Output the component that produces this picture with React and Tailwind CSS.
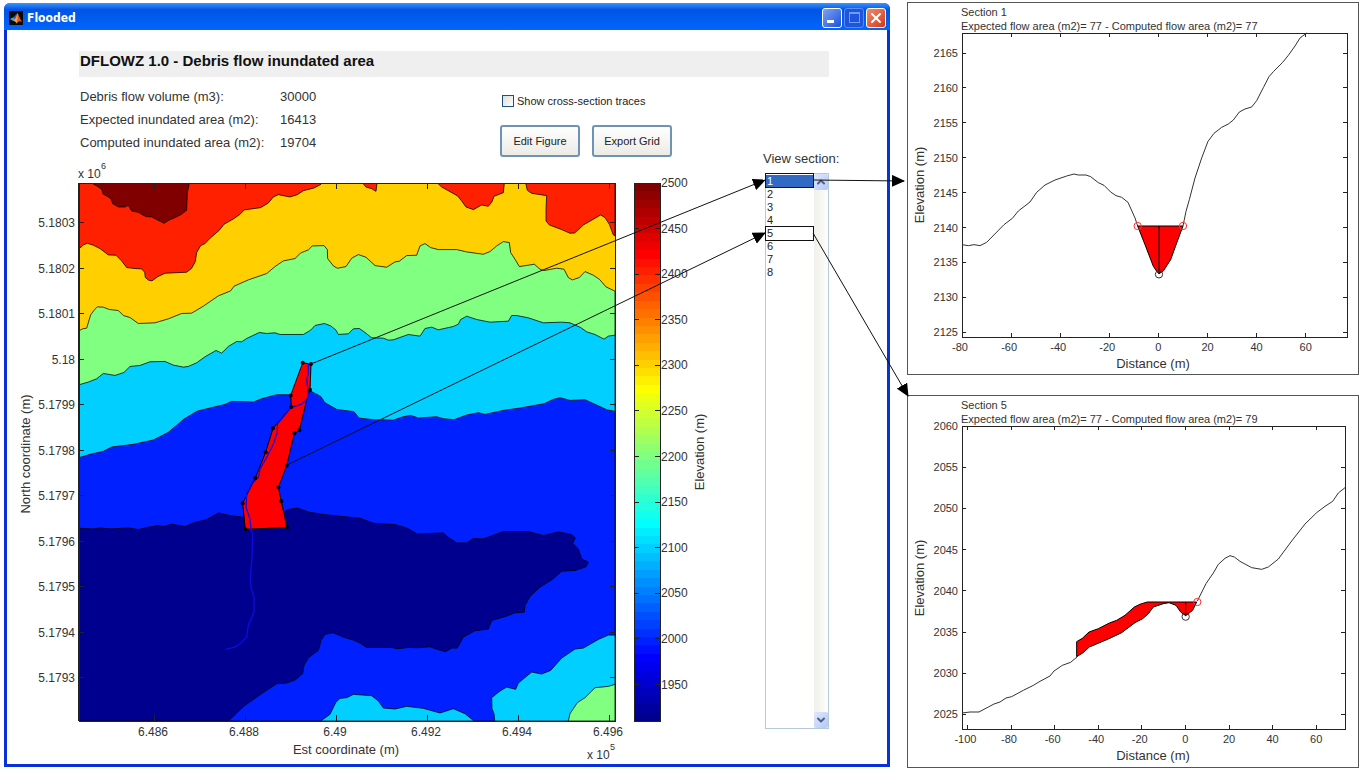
import React, { useLayoutEffect, useRef, useState } from 'react';
import { ChevronDown, ChevronUp, X } from 'lucide-react';

const AXIS = '#222';
const LABEL = '#333';

// Elevation bands, sampled on a 1608 x 1616 grid
const BANDS = [
  { fill: '#800000', d: 'M38 0 55 10 68 19 73 34 88 42 97 49 101 62 118 72 138 72 148 67 158 84 178 88 201 101 218 102 255 121 273 110 288 104 308 94 323 82 325 29 331 0Z' },
  { fill: '#ff2000', d: 'M851 0 861 12 878 17 891 25 894 0Z' },
  { fill: '#ff2000', d: 'M1075 0 1088 12 1113 26 1136 39 1148 54 1161 72 1183 80 1208 66 1228 70 1239 56 1245 40 1273 29 1276 0Z' },
  { fill: '#ff2000', d: 'M1340 0 1345 22 1358 31 1403 38 1401 79 1401 114 1411 126 1448 140 1473 151 1487 150 1513 126 1548 106 1565 96 1578 104 1591 124 1603 156 1608 159V0Z' },
  { fill: '#80ff80', d: 'M0 444 11 438 23 436 35 396 47 380 55 372 73 373 91 380 118 383 133 398 153 404 178 422 228 420 268 408 308 392 338 391 373 370 418 339 455 324 465 310 508 291 563 272 588 251 613 234 648 227 665 210 688 201 700 189 735 188 745 200 746 227 763 249 775 256 801 251 818 226 838 215 861 223 888 248 923 253 948 237 961 235 983 218 1013 217 1023 189 1038 182 1055 194 1078 200 1133 200 1163 207 1213 214 1233 206 1253 189 1273 176 1291 179 1295 209 1308 229 1321 251 1366 244 1383 259 1395 263 1433 256 1455 259 1468 284 1480 291 1501 284 1518 266 1543 277 1561 289 1581 312 1608 325V1616H0Z' },
  { fill: '#00cfff', d: 'M0 606 28 598 53 588 73 572 108 578 135 569 153 551 183 548 213 537 258 536 283 547 313 553 328 551 353 540 378 522 411 503 428 511 448 491 473 476 488 477 503 467 541 449 563 452 588 450 603 455 673 455 695 442 708 428 736 422 755 429 771 442 778 455 808 453 823 438 841 437 858 449 878 465 913 466 928 472 943 471 988 455 1023 460 1038 437 1058 433 1078 441 1123 431 1138 424 1145 410 1163 400 1193 410 1233 418 1288 415 1298 398 1313 398 1348 405 1393 420 1448 418 1473 420 1505 434 1523 447 1548 455 1575 469 1588 460 1608 457V1616H0Z' },
  { fill: '#0020ff', d: 'M0 825 33 815 73 806 98 793 163 785 223 772 268 749 315 709 355 685 393 676 438 665 458 656 503 657 523 658 548 648 593 636 633 636 693 624 725 641 738 660 773 680 825 687 840 706 883 711 943 712 973 702 995 698 1018 706 1073 702 1093 708 1125 711 1163 697 1198 690 1218 695 1273 683 1323 676 1395 663 1423 650 1443 645 1473 653 1518 651 1553 667 1583 681 1608 686V1616H0Z' },
  { fill: '#00008f', d: 'M0 1037 43 1039 63 1036 93 1039 148 1036 178 1041 208 1034 238 1029 253 1032 278 1025 318 1032 343 1021 383 1011 418 991 453 999 493 1004 613 989 628 981 655 976 688 988 728 995 783 1001 843 1007 883 1022 948 1026 983 1036 1015 1054 1093 1051 1108 1064 1133 1081 1163 1081 1183 1068 1213 1069 1273 1047 1348 1047 1393 1059 1438 1048 1478 1056 1489 1066 1481 1082 1498 1099 1508 1129 1528 1139 1521 1153 1488 1164 1448 1166 1423 1189 1383 1214 1353 1242 1338 1269 1336 1289 1308 1291 1283 1301 1238 1314 1228 1340 1188 1345 1153 1364 1135 1397 1118 1397 1100 1408 1078 1402 1053 1393 1018 1396 988 1395 955 1399 938 1395 863 1395 843 1382 823 1373 793 1364 763 1351 738 1356 726 1374 718 1404 688 1426 675 1449 671 1474 648 1493 623 1502 593 1504 548 1534 498 1569 448 1616H0Z' },
  { fill: '#00cfff', d: 'M725 1616 753 1596 771 1559 783 1548 803 1546 823 1536 878 1540 898 1556 913 1577 948 1580 983 1572 1033 1578 1083 1592 1123 1579 1158 1594 1185 1616Z' },
  { fill: '#00cfff', d: 'M1247 1616 1245 1594 1239 1579 1238 1546 1263 1526 1283 1514 1310 1521 1318 1502 1358 1469 1388 1475 1415 1464 1448 1427 1488 1400 1513 1397 1558 1371 1588 1358 1608 1358V1616Z' },
  { fill: '#80ff80', d: 'M1468 1616 1473 1594 1495 1561 1518 1546 1548 1516 1588 1512 1608 1506V1616Z' },
];

const UPPER_SLOPE = 'M0 198 13 186 25 181 43 187 63 197 88 216 111 217 128 234 143 254 168 257 188 258 197 268 199 284 209 292 219 294 235 282 258 271 323 268 338 256 349 236 353 209 365 188 378 182 393 166 421 142 435 124 463 108 483 94 495 81 545 74 568 60 583 42 598 35 633 42 655 35 673 23 705 15 726 4 730 0H0Z';

const STREAM = '688,544 688,574 683,589 688,634 685,649 668,664 637,674 595,724 595,749 583,784 563,824 543,859 538,884 518,904 503,934 501,974 513,1009 516,1040 521,1054 519,1124 514,1184 516,1214 525,1244 525,1289 508,1329 503,1364 483,1384 468,1394 438,1401';

const FLOW = [
  [671, 540], [696, 544], [693, 621], [681, 659], [661, 743], [646, 752], [623, 849], [598, 914], [607, 956],
  [624, 1035], [499, 1040], [491, 962], [529, 886], [560, 809], [582, 737], [637, 673], [635, 638],
];

const NORTH = ['5.1803', '5.1802', '5.1801', '5.18', '5.1799', '5.1798', '5.1797', '5.1796', '5.1795', '5.1794', '5.1793'];
const EAST = ['6.486', '6.488', '6.49', '6.492', '6.494', '6.496'];
const LEVELS = [2500, 2450, 2400, 2350, 2300, 2250, 2200, 2150, 2100, 2050, 2000, 1950];

const SECTIONS = {
  1: {
    title: 'Section 1',
    subtitle: 'Expected flow area (m2)= 77 - Computed flow area (m2)= 77',
    width: 385,
    height: 304,
    x: { values: [-80, -60, -40, -20, 0, 20, 40, 60], start: 0, step: 49.1 },
    y: { values: [2165, 2160, 2155, 2150, 2145, 2140, 2135, 2130, 2125], start: 20, step: 34.9 },
    ground: [
      '0,635 19,638 36,635 54,638 74,628 126,575 151,556 169,534 204,507 224,478 249,456 279,441 314,429 336,423 349,426 372,426 386,431 409,449 426,457 446,477 462,488 479,493 498,508 519,555 527,579',
      '663,579 672,535 682,500 699,435 719,375 738,325 756,301 779,283 799,273 814,261 832,237 849,228 869,222 884,203 904,164 921,131 934,116 962,88 979,67 999,39 1014,15 1034,0',
    ],
    flow: '527,579 549,635 574,700 584,715 591,722 604,714 626,680 644,630 663,579',
    axis: [591, 579, 722],
    edges: [[527, 579], [663, 579]],
    thalweg: [591, 724],
  },
  5: {
    title: 'Section 5',
    subtitle: 'Expected flow area (m2)= 77 - Computed flow area (m2)= 79',
    width: 383,
    height: 303,
    x: { values: [-100, -80, -60, -40, -20, 0, 20, 40, 60], start: 5.4, step: 43.6 },
    y: { values: [2060, 2055, 2050, 2045, 2040, 2035, 2030, 2025], start: 0, step: 41.2 },
    ground: [
      '0,861 24,858 51,858 79,843 96,834 114,828 132,816 149,812 184,793 214,778 234,766 264,750 276,735 301,718 326,709 346,692',
      '706,525 732,473 754,441 769,415 789,397 804,389 817,393 834,406 869,425 899,430 919,423 949,399 989,345 1029,294 1064,260 1089,241 1112,226 1129,201 1149,185',
    ],
    flow: '344,692 344,647 361,637 381,618 409,608 442,591 464,583 489,568 517,543 536,534 556,528 704,528 692,553 671,569 656,558 642,538 621,530 604,533 574,543 559,563 542,578 519,590 479,620 439,639 382,663 362,681',
    axis: [671, 528, 569],
    edges: [[706, 528]],
    thalweg: [671, 572],
  },
};

const clamp = (v) => Math.max(0, Math.min(1, v));

// 64 step jet colour map
const jet = (n) => {
  const u = n / 16;
  const r = clamp(Math.min(u - 1.5, 4.5 - u));
  const g = clamp(Math.min(u - 0.5, 3.5 - u));
  const b = clamp(Math.min(u + 0.5, 2.5 - u));
  return `rgb(${Math.round(r * 255)},${Math.round(g * 255)},${Math.round(b * 255)})`;
};

const MatlabIcon = () => (
  <svg viewBox="0 0 14 14" className="h-3.5 w-3.5 shrink-0" aria-hidden="true">
    <rect width="14" height="14" fill="#0a0a0a" />
    <path d="M1 8 4.5 6.3 6.5 8.2 4.2 10Z" fill="#4aa3d8" />
    <path d="M4.5 6.3 8.5 2 6.5 8.2Z" fill="#2c6a9a" />
    <path d="M8.5 2C9.8 4 11 8 13 11 11 9.6 10 9.8 7.5 12.5 7 10.5 5.6 9.8 4.2 10 6.6 8.2 7.6 5 8.5 2Z" fill="#e2571e" />
    <path d="M8.5 2C8.8 5 8.8 8 7.5 12.5 7 10.5 5.8 9.8 4.2 10 6.6 8.2 7.6 5 8.5 2Z" fill="#f5a04a" />
  </svg>
);

const TitleBar = () => (
  <header className="flex h-[27px] items-center gap-1 rounded-t-md bg-linear-to-b from-[#3a93ff] via-[#0054e3] via-25% to-[#0066ff] pt-0.5 pr-1 pl-[5px]">
    <MatlabIcon />
    <h1 className="flex-1 font-['DejaVu_Sans_Condensed','DejaVu_Sans',sans-serif] text-xs leading-4 font-bold text-white">Flooded</h1>
    <div className="flex gap-0.5">
      <button type="button" aria-label="Minimize" className="flex h-5 w-5 items-end rounded-[3px] border border-white bg-linear-to-br from-[#7da2f7] to-[#1c4fd8] p-1">
        <span className="h-[3px] w-[7px] bg-white" />
      </button>
      <button type="button" aria-label="Maximize" disabled className="flex h-5 w-5 items-center justify-center rounded-[3px] border border-[#5c8cf0] bg-[#1f55dc]">
        <span className="h-[11px] w-[11px] border border-t-2 border-[#6f9bf5]" />
      </button>
      <button type="button" aria-label="Close" className="flex h-5 w-5 items-center justify-center rounded-[3px] border border-white bg-linear-to-br from-[#f08a6c] to-[#d4340c] text-white">
        <X size={16} strokeWidth={3} />
      </button>
    </div>
  </header>
);

const InundationMap = ({ ref }) => (
  <svg ref={ref} viewBox="7 153 750 611" className="h-auto min-w-0 flex-1" role="img" aria-label="Debris flow inundated area map">
    <svg x="79" y="183" width="536" height="538" viewBox="0 0 1608 1616" preserveAspectRatio="none">
      <rect width="1608" height="1616" fill="#ffcf00" />
      <g stroke="#000" strokeOpacity="0.75" strokeWidth="3" strokeLinejoin="round">
        <path d={UPPER_SLOPE} fill="#ff2000" />
        {BANDS.map((band) => (
          <path key={band.d} d={band.d} fill={band.fill} />
        ))}
      </g>
      <polygon points={FLOW.map((p) => p.join(',')).join(' ')} fill="#ff0000" stroke="#000" strokeWidth="3" />
      <polyline points={STREAM} fill="none" stroke="#1408dc" strokeWidth="4" />
      {FLOW.filter((p) => p[1] !== 659).map(([x, y]) => (
        <circle key={`${x}-${y}`} cx={x} cy={y} r="6" fill="#000" />
      ))}
    </svg>

    <g stroke={AXIS} shapeRendering="crispEdges">
      <rect x="79" y="183" width="536" height="538" fill="none" />
      <path d="M79 183V721" strokeWidth="2" />
      {NORTH.map((label, i) => (
        <path key={label} d={`M79 ${222.5 + i * 45.5}h5M615 ${222.5 + i * 45.5}h-5`} />
      ))}
      {EAST.map((label, i) => (
        <path key={label} d={`M${154 + i * 91} 183v6M${154 + i * 91} 721v-6`} />
      ))}
    </g>

    <g fontSize="12" fill={LABEL}>
      {NORTH.map((label, i) => (
        <text key={label} x="75" y={227 + i * 45.5} textAnchor="end">{label}</text>
      ))}
      {EAST.map((label, i) => (
        <text key={label} x={153 + i * 91} y="736" textAnchor="middle">{label}</text>
      ))}
      <text x="78" y="178">x 10</text>
      <text x="587" y="759">x 10</text>
    </g>
    <g fontSize="9" fill={LABEL}>
      <text x="101" y="169">6</text>
      <text x="610" y="750">5</text>
    </g>

    <g shapeRendering="crispEdges">
      {Array.from({ length: 64 }, (_, i) => (
        <rect key={i} x="634" y={183 + (i * 538) / 64} width="26" height="9" fill={jet(64 - i)} />
      ))}
      <rect x="634" y="183" width="26" height="538" fill="none" stroke={AXIS} />
      {LEVELS.slice(1).map((level, i) => (
        <path key={level} d={`M634 ${228.5 + i * 45.6}h5M660 ${228.5 + i * 45.6}h-5`} stroke={AXIS} />
      ))}
    </g>
    <g fontSize="12" fill={LABEL}>
      {LEVELS.map((level, i) => (
        <text key={level} x="661" y={187 + i * 45.6}>{level}</text>
      ))}
    </g>

    <g fontSize="13" fill={LABEL} textAnchor="middle">
      <text x="346" y="754">Est coordinate (m)</text>
      <text transform="translate(30 454) rotate(-90)">North coordinate (m)</text>
      <text transform="translate(704 452) rotate(-90)">Elevation (m)</text>
    </g>
  </svg>
);

const SectionPlot = ({ section, ref }) => {
  const { width, height, x, y } = section;
  const left = 54;
  const top = 30;
  const xs = x.values.map((_, i) => left + x.start + i * x.step);
  const ys = y.values.map((_, i) => top + y.start + i * y.step);

  return (
    <figure ref={ref} className="border border-[#555]">
      <svg viewBox="0 0 450 371" className="block h-auto w-full" role="img" aria-label={section.title}>
        <g stroke={AXIS} fill="none" shapeRendering="crispEdges">
          <rect x={left} y={top} width={width} height={height} />
          {xs.map((v) => (
            <path key={v} d={`M${v} ${top}v4M${v} ${top + height}v-4`} />
          ))}
          {ys.map((v) => (
            <path key={v} d={`M${left} ${v}h4M${left + width} ${v}h-4`} />
          ))}
        </g>

        <svg x={left} y={top} width={width} height={height} viewBox={`0 0 ${width * 3} ${height * 3}`} overflow="visible">
          <g fill="none" stroke="#333" strokeWidth="3">
            {section.ground.map((points) => (
              <polyline key={points} points={points} />
            ))}
            <polygon points={section.flow} fill="#ff0000" stroke="#000" />
            <path d={`M${section.axis[0]} ${section.axis[1]}V${section.axis[2]}`} stroke="#000" />
            {section.edges.map(([cx, cy]) => (
              <circle key={cx} cx={cx} cy={cy} r="11" stroke="#ff3030" />
            ))}
            <circle cx={section.thalweg[0]} cy={section.thalweg[1]} r="11" />
          </g>
        </svg>

        <g fontSize="11" fill={LABEL}>
          <text x={left - 1} y="13">{section.title}</text>
          <text x={left - 1} y="27">{section.subtitle}</text>
          {x.values.map((v, i) => (
            <text key={v} x={v < 0 ? xs[i] - 2 : xs[i]} y={top + height + 14} textAnchor="middle">{v}</text>
          ))}
          {y.values.map((v, i) => (
            <text key={v} x={left - 4} y={ys[i] + 4} textAnchor="end">{v}</text>
          ))}
        </g>
        <g fontSize="13" fill={LABEL} textAnchor="middle">
          <text x="245" y={top + height + 31}>Distance (m)</text>
          <text transform="translate(16 182) rotate(-90)">Elevation (m)</text>
        </g>
      </svg>
    </figure>
  );
};

const Callouts = ({ boxes, lines }) => (
  <svg className="pointer-events-none absolute inset-0 h-full w-full" aria-hidden="true">
    <defs>
      <marker id="tip" markerUnits="userSpaceOnUse" markerWidth="13" markerHeight="12" refX="12" refY="6" orient="auto">
        <path d="M0 0 13 6 0 12Z" />
      </marker>
    </defs>
    {boxes.map(([x, y]) => (
      <rect key={y} x={x} y={y} width="48" height="14" fill="none" stroke="#111" shapeRendering="crispEdges" />
    ))}
    {lines.map(([x1, y1, x2, y2]) => (
      <line key={`${x1}-${y1}`} x1={x1} y1={y1} x2={x2} y2={y2} stroke="#111" markerEnd="url(#tip)" />
    ))}
  </svg>
);

const results = [
  ['Debris flow volume (m3):', '30000'],
  ['Expected inundated area (m2):', '16413'],
  ['Computed inundated area (m2):', '19704'],
];

const ROW = 13;

const actionButton = 'h-8 w-20 rounded-[3px] border-2 border-[#6f93b3] bg-linear-to-b from-white to-[#ecebe5] text-[11px] text-[#222]';
const scrollButton = 'flex h-4 w-3.5 items-center justify-center rounded-xs bg-linear-to-br from-[#dfe8ff] to-[#b4c8f6] text-[#4d6185]';

const App = () => {
  const [traces, setTraces] = useState(false);
  const [selected, setSelected] = useState('1');
  const [callouts, setCallouts] = useState({ boxes: [], lines: [] });
  const root = useRef(null);
  const map = useRef(null);
  const list = useRef(null);
  const first = useRef(null);
  const fifth = useRef(null);

  // Links from the traces on the map to the list rows, and on to the section plots
  useLayoutEffect(() => {
    const measure = () => {
      const base = root.current.getBoundingClientRect();
      const place = (el) => {
        const box = el.current.getBoundingClientRect();
        return { x: box.left - base.left, y: box.top - base.top, w: box.width };
      };
      const m = place(map);
      const l = place(list);
      const a = place(first);
      const b = place(fifth);
      const k = m.w / 750;
      const right = l.x + 48;
      const row1 = l.y + 7;
      const row5 = l.y + 4 * ROW + 8;
      setCallouts({
        boxes: [[l.x, l.y], [l.x, l.y + 4 * ROW + 1]],
        lines: [
          [m.x + 304 * k, m.y + 211 * k, l.x, row1],
          [m.x + 280 * k, m.y + 312 * k, l.x, row5],
          [right, row1, a.x - 3, row1 + 1],
          [right, row5, b.x + 1, b.y + 1],
        ],
      });
    };
    measure();
    window.addEventListener('resize', measure);
    return () => window.removeEventListener('resize', measure);
  }, []);

  const move = (step) => {
    setSelected(String(Math.max(1, Math.min(8, Number(selected) + step))));
  };

  return (
    <main
      ref={root}
      className="relative grid grid-cols-[886fr_452fr] gap-[17px] bg-white px-1 pt-0.5 pb-1 font-['Liberation_Sans',Arial,sans-serif] text-[#333]"
    >
      <section className="mt-px mb-px flex flex-col rounded-t-md bg-[#0831d9]">
        <TitleBar />
        <div className="mx-[3px] mb-[3px] flex-1 bg-white pt-[21px]">
          <h2 className="mr-[58px] ml-[72px] h-[26px] bg-[#efefef] pl-px text-[15px] leading-5 font-bold text-[#111]">
            DFLOWZ 1.0 - Debris flow inundated area
          </h2>

          <div className="mt-2.5 flex pl-[73px]">
            <dl className="flex w-[420px] flex-col gap-[3px] text-[13px] leading-5">
              {results.map(([name, value]) => (
                <div key={name} className="flex">
                  <dt className="w-[200px]">{name}</dt>
                  <dd>{value}</dd>
                </div>
              ))}
            </dl>
            <div className="-mb-1 flex flex-col gap-[18px] pt-2">
              <label className="ml-0.5 flex h-3 items-center gap-[3px] text-[11px] text-[#222]">
                <input
                  type="checkbox"
                  checked={traces}
                  onChange={(e) => setTraces(e.target.checked)}
                  className="h-3 w-3 appearance-none border border-[#1c5180] bg-linear-to-br from-[#dcdcd7] to-white checked:bg-[#21a121]"
                />
                Show cross-section traces
              </label>
              <div className="flex gap-3">
                <button type="button" className={actionButton}>Edit Figure</button>
                <button type="button" className={actionButton}>Export Grid</button>
              </div>
            </div>
          </div>

          <div className="flex">
            <InundationMap ref={map} />
            <div className="flex w-[130px] flex-col pb-[35px] pl-1.5">
              <label htmlFor="section" className="text-[13px] leading-3">View section:</label>
              <div ref={list} className="mt-2 ml-0.5 flex w-16 flex-1 border border-[#b5c9da]">
                <select
                  id="section"
                  size={8}
                  value={selected}
                  onChange={(e) => setSelected(e.target.value)}
                  className="h-full w-12 overflow-hidden bg-white pt-px text-[11px] outline-none"
                >
                  {[1, 2, 3, 4, 5, 6, 7, 8].map((n) => (
                    <option
                      key={n}
                      value={n}
                      className="h-[13px] min-h-0 p-0 pl-px text-[11px] leading-[13px] text-[#222] checked:bg-[linear-gradient(#316ac5,#316ac5)] checked:text-white"
                    >
                      {n}
                    </option>
                  ))}
                </select>
                <div className="flex flex-1 flex-col items-center justify-between bg-linear-to-r from-[#f0efe9] to-[#fefefb]">
                  <button type="button" aria-label="Scroll up" onClick={() => move(-1)} className={scrollButton}>
                    <ChevronUp size={12} strokeWidth={4} />
                  </button>
                  <button type="button" aria-label="Scroll down" onClick={() => move(1)} className={scrollButton}>
                    <ChevronDown size={12} strokeWidth={4} />
                  </button>
                </div>
              </div>
            </div>
          </div>
        </div>
      </section>

      <aside className="flex flex-col gap-5">
        <SectionPlot ref={first} section={SECTIONS[1]} />
        <SectionPlot ref={fifth} section={SECTIONS[5]} />
      </aside>

      <Callouts boxes={callouts.boxes} lines={callouts.lines} />
    </main>
  );
};

export default App;
